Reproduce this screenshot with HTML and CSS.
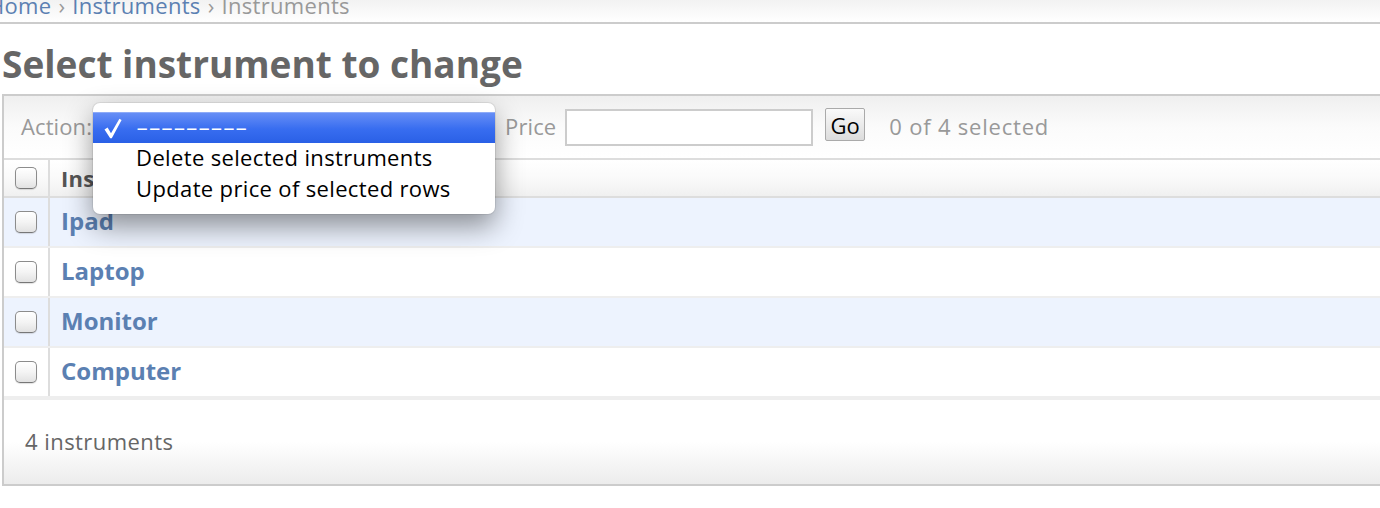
FILE: index.html
```html
<!DOCTYPE html>
<html lang="en">
<head>
<meta charset="utf-8">
<title>Select instrument to change</title>
<link rel="stylesheet" href="styles.css">
</head>
<body>
<div class="breadcrumbs">
  <div class="crumbs-inner"><a href="#" class="crumb">Home</a> <span class="sep">›</span> <a href="#" class="crumb">Instruments</a> <span class="sep">›</span> <span class="current">Instruments</span></div>
</div>
<div class="content">
  <h1 class="page-title">Select instrument to change</h1>
  <div class="changelist">
    <div class="actions">
      <span class="label">Action:</span>
      <div class="select-wrap">
        <div class="fake-select">---------</div>
        <div class="popup">
          <div class="popup-item selected"><svg class="check" width="18" height="21" viewBox="0 0 18 21"><path d="M0.5 11.5 L3.6 9.6 L7 15.2 L15.4 0.8 L17.6 1.9 L7.8 20.2 L6.2 20.2 Z" fill="#fff"/></svg><span class="dashes">---------</span></div>
          <div class="popup-item">Delete selected instruments</div>
          <div class="popup-item">Update price of selected rows</div>
        </div>
      </div>
      <span class="label price-label">Price</span>
      <input class="price-input" type="text">
      <button class="go-btn" type="button">Go</button>
      <span class="counter">0 of 4 selected</span>
    </div>
    <div class="table">
      <div class="row head">
        <div class="cell check-cell"><span class="checkbox"></span></div>
        <div class="cell name-cell"><span class="head-text">Instrument</span></div>
      </div>
      <div class="row odd">
        <div class="cell check-cell"><span class="checkbox"></span></div>
        <div class="cell name-cell"><a href="#" class="item-link">Ipad</a></div>
      </div>
      <div class="row">
        <div class="cell check-cell"><span class="checkbox"></span></div>
        <div class="cell name-cell"><a href="#" class="item-link">Laptop</a></div>
      </div>
      <div class="row odd">
        <div class="cell check-cell"><span class="checkbox"></span></div>
        <div class="cell name-cell"><a href="#" class="item-link">Monitor</a></div>
      </div>
      <div class="row last">
        <div class="cell check-cell"><span class="checkbox"></span></div>
        <div class="cell name-cell"><a href="#" class="item-link">Computer</a></div>
      </div>
    </div>
    <div class="paginator">4 instruments</div>
  </div>
</div>
</body>
</html>
```

FILE: styles.css
```css
html, body {
  margin: 0;
  padding: 0;
  background: #fff;
}
body {
  width: 1380px;
  height: 508px;
  overflow: hidden;
  font-family: "Open Sans", "DejaVu Sans", sans-serif;
  font-size: 22px;
  letter-spacing: 0.3px;
  color: #333;
}
a { text-decoration: none; }

.breadcrumbs {
  height: 22px;
  border-bottom: 2px solid #ccc;
  background: linear-gradient(#f2f2f2, #fff);
  overflow: hidden;
}
.crumbs-inner {
  margin-top: -6px;
  margin-left: -12px;
  line-height: 22px;
  white-space: nowrap;
  word-spacing: 1px;
  color: #999;
}
.crumb { color: #5b80b2; }
.sep { color: #999; }
.current { color: #999; }

.content {
  margin-left: 2px;
}
.page-title {
  margin: 18px 0 8px 0;
  font-size: 37px;
  line-height: 44px;
  font-weight: 700;
  letter-spacing: 0;
  color: #666;
}

.changelist {
  border: 2px solid #ccc;
  margin-right: -10px;
}

.actions {
  border-bottom: 2px solid #ddd;
  background: linear-gradient(#efefef 0%, #fbfbfb 50%, #fff 100%);
  display: flex;
  align-items: center;
  padding-left: 17px;
  padding-bottom: 3px;
  box-sizing: border-box;
  height: 64px;
}
.label {
  color: #999;
  letter-spacing: 0.1px;
}
.select-wrap {
  position: relative;
  width: 402px;
  height: 30px;
  margin-left: 1px;
}
.fake-select {
  height: 30px;
  line-height: 30px;
  padding-left: 40px;
  color: #000;
}
.popup {
  position: absolute;
  left: 0;
  top: -8px;
  width: 402px;
  padding: 9px 0;
  background: #fff;
  border-radius: 7px;
  box-shadow: 0 0 0 1px rgba(0,0,0,0.07), 0 12px 28px rgba(0,0,0,0.42);
  color: #000;
  z-index: 5;
}
.popup-item {
  height: 31px;
  line-height: 29px;
  padding-left: 43px;
  letter-spacing: 0.35px;
  white-space: nowrap;
}
.popup-item.selected {
  position: relative;
  background: linear-gradient(#6990f6, #386df0 55%, #2a60e6);
  box-shadow: inset 0 1px 0 rgba(255,255,255,0.25);
  color: #fff;
}
.check {
  position: absolute;
  left: 11px;
  top: 6px;
}
.dashes {
  display: inline-block;
  letter-spacing: 0;
  transform: scaleX(1.75);
  transform-origin: left center;
}
.price-label { margin-left: 10px; }
.price-input {
  margin: 4px 0 0 9px;
  width: 248px;
  height: 37px;
  box-sizing: border-box;
  border: 2px solid #ccc;
  background: #fff;
  padding: 0;
}
.go-btn {
  margin: -2px 0 0 12px;
  width: 40px;
  height: 33px;
  box-sizing: border-box;
  padding: 0;
  border: 1px solid #aaa;
  border-radius: 2px;
  background: linear-gradient(#fafafa, #dcdcdc);
  font-family: "Open Sans", "DejaVu Sans", sans-serif;
  font-size: 22px;
  letter-spacing: 0;
  color: #000;
  line-height: 30px;
}
.counter {
  margin-left: 24px;
  letter-spacing: 0.8px;
  color: #999;
}

.row {
  display: flex;
  height: 48px;
  border-bottom: 2px solid #eee;
}
.row.head {
  height: 36px;
  border-bottom: 2px solid #ddd;
  background: linear-gradient(#fff 0%, #fafafa 50%, #f0f0f0 100%);
}
.row.odd { background: #edf3fe; }
.cell {
  display: flex;
  align-items: center;
}
.check-cell {
  width: 33px;
  padding-left: 11px;
  border-right: 2px solid #ddd;
}
.name-cell {
  padding-left: 11px;
  padding-bottom: 3px;
}
.row.head .name-cell { padding-bottom: 1px; }
.checkbox {
  display: block;
  width: 22px;
  height: 22px;
  box-sizing: border-box;
  border: 1px solid #8c8c8c;
  border-bottom-color: #777;
  border-radius: 5px;
  background: linear-gradient(#fff 0%, #f4f4f4 50%, #e2e2e2 100%);
  box-shadow: 0 1px 1px rgba(0,0,0,0.12);
}
.head-text {
  font-weight: 700;
  color: #555;
  font-size: 22px;
}
.item-link {
  color: #5b80b2;
  font-weight: 700;
  font-size: 24px;
  letter-spacing: 0;
}

.paginator {
  height: 86px;
  border-top: 2px solid #eee;
  box-sizing: border-box;
  padding: 21px 0 0 21px;
  color: #666;
  letter-spacing: 0.45px;
  line-height: 40px;
  background: linear-gradient(#fff 0%, #fff 50%, #ececec 100%);
}
```
